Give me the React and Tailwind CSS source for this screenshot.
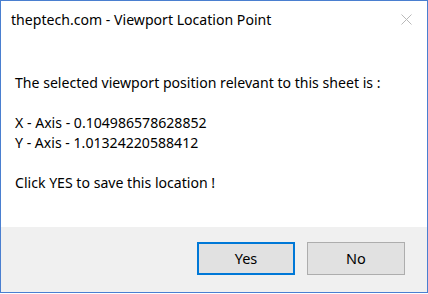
import React from 'react';

function DialogButton({ label, primary }) {
  return (
    <button
      className={
        primary
          ? 'w-[98px] h-[33px] bg-[#e1e1e1] border-2 border-[#0078d7] text-[14.5px] text-black'
          : 'w-[98px] h-[33px] bg-[#e1e1e1] border border-[#adadad] text-[14.5px] text-black'
      }
    >
      {label}
    </button>
  );
}

export default function App() {
  return (
    <div className="w-[428px] h-[294px] bg-white">
      <div
        className="w-[428px] h-[293px] border border-[#4a7fd0] flex flex-col text-black"
        style={{ fontFamily: '"Noto Sans", "Open Sans", sans-serif' }}
      >
        <div className="flex items-center justify-between h-[38px] pl-[10px] pr-[15px]">
          <span className="text-[14.1px] leading-[20px]">theptech.com - Viewport Location Point</span>
          <svg width="11" height="11" viewBox="0 0 11 11" className="mt-[-2px]">
            <path d="M0.5 0.5 L10.5 10.5 M10.5 0.5 L0.5 10.5" stroke="#b9b9b9" strokeWidth="1" fill="none" />
          </svg>
        </div>
        <div className="flex-1 pl-[14px] pt-[34px] text-[14.1px] leading-[20px]">
          <p>The selected viewport position relevant to this sheet is :</p>
          <p>&nbsp;</p>
          <p>X - Axis - 0.104986578628852</p>
          <p>Y - Axis - 1.01324220588412</p>
          <p>&nbsp;</p>
          <p>Click YES to save this location !</p>
        </div>
        <div className="h-[65px] bg-[#f0f0f0] flex justify-end items-start gap-[12px] pt-[15px] pr-[22px]">
          <DialogButton label="Yes" primary />
          <DialogButton label="No" />
        </div>
      </div>
    </div>
  );
}
